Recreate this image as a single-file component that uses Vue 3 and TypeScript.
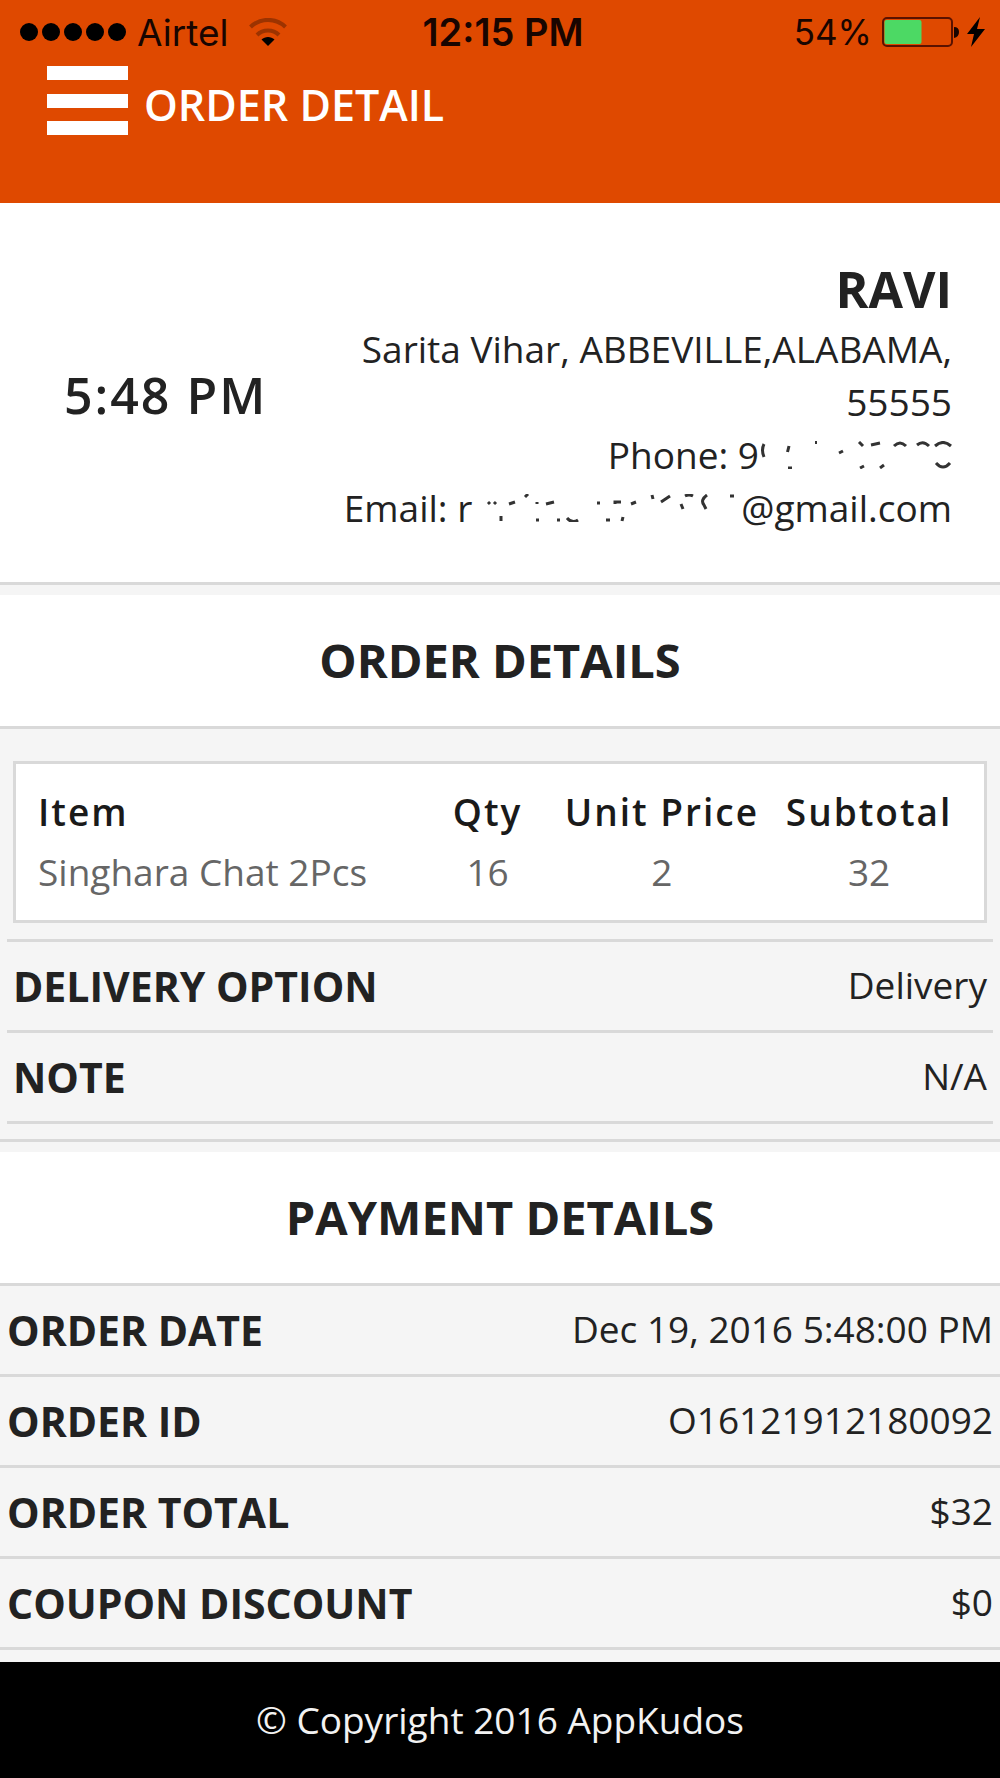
<script setup lang="ts">
interface Entry {
  label: string
  value: string
}

interface OrderItem {
  name: string
  qty: number
  unitPrice: number
}

const addressLines: string[] = ['Sarita Vihar, ABBEVILLE,ALABAMA,', '55555']

const items: OrderItem[] = [{ name: 'Singhara Chat 2Pcs', qty: 16, unitPrice: 2 }]

const orderEntries: Entry[] = [
  { label: 'DELIVERY OPTION', value: 'Delivery' },
  { label: 'NOTE', value: 'N/A' },
]

const paymentEntries: Entry[] = [
  { label: 'ORDER DATE', value: 'Dec 19, 2016 5:48:00 PM' },
  { label: 'ORDER ID', value: 'O16121912180092' },
  { label: 'ORDER TOTAL', value: '$32' },
  { label: 'COUPON DISCOUNT', value: '$0' },
]
</script>

<template>
  <div class="page">
    <header class="top">
      <div class="status">
        <div class="carrier">
          <span class="signal"><i v-for="n in 5" :key="n"></i></span>
          <span>Airtel</span>
          <svg class="wifi" width="38" height="28" viewBox="0 0 38 28" aria-hidden="true">
            <g fill="none" stroke="#9c3300" stroke-width="4">
              <path d="M1.500 9C11-0.500 27-0.500 36.500 9" />
              <path d="M8 17C14 11 24 11 30 17" />
            </g>
            <path d="M12.500 21.500C16 18 22 18 25.500 21.500L19 28Z" fill="#000" />
          </svg>
        </div>
        <div class="clock">12:15 PM</div>
        <div class="power">
          <span>54%</span>
          <svg width="104" height="32" viewBox="0 0 104 32" aria-hidden="true">
            <rect x="1" y="2" width="69" height="28" rx="4" fill="none" stroke="#5a1200" stroke-width="2" />
            <rect x="2.500" y="4" width="37" height="24" rx="2" fill="#4cd964" />
            <path d="M72 11q5 0 5 5t-5 6z" fill="#1a0500" />
            <path d="M98 1L85 18H92L89 31L103 13H95Z" fill="#000" />
          </svg>
        </div>
      </div>
      <div class="bar">
        <button class="menu" type="button" aria-label="Menu"><i></i><i></i><i></i></button>
        <h1>ORDER DETAIL</h1>
      </div>
    </header>

    <main>
      <section class="customer">
        <time class="time">5:48 PM</time>
        <address>
          <strong>RAVI</strong>
          <span v-for="line in addressLines" :key="line">{{ line }}</span>
          <span>Phone: 9<svg class="scrub" width="193" height="28" viewBox="0 0 193 28" aria-hidden="true">
              <path d="M5 3Q2 9 5 16M30 5L28.500 11M29 27H33M56 1.500H58M80 12L84 10M135 5Q141-1 147 5M158 4Q164-1 170 5M176 5Q184-2 192 5M177 22Q184 30 191 22M100 1L104 5M112 4L121 2M101 27L105 25M121 27L125 24" />
            </svg></span>
          <span>Email: r<svg class="scrub" width="269" height="28" viewBox="0 0 269 28" aria-hidden="true">
              <path d="M16 8L18 10M22 10L24 8M29 22V27M37 10L43 8M53 3L56 0M65 8V10M74 10L82 8M64 26H67M85 26H88M95 24Q100 30 106 26M125 9H128M143 10V8H149M134 26H138M150 27L151 23M159 10L164 8M180 1L181 5M189 8L198 2M209 10L211 15M213 2Q217 0 221 2M235 1Q228 6 232 11L234 15M258 2H262" />
            </svg>@gmail.com</span>
        </address>
      </section>

      <section class="block">
        <h2>ORDER DETAILS</h2>
        <div class="card">
          <table>
            <thead>
              <tr>
                <th scope="col">Item</th>
                <th scope="col">Qty</th>
                <th scope="col">Unit Price</th>
                <th scope="col">Subtotal</th>
              </tr>
            </thead>
            <tbody>
              <tr v-for="item in items" :key="item.name">
                <td>{{ item.name }}</td>
                <td>{{ item.qty }}</td>
                <td>{{ item.unitPrice }}</td>
                <td>{{ item.qty * item.unitPrice }}</td>
              </tr>
            </tbody>
          </table>
        </div>
        <dl class="entries inset">
          <div v-for="entry in orderEntries" :key="entry.label">
            <dt>{{ entry.label }}</dt>
            <dd>{{ entry.value }}</dd>
          </div>
        </dl>
      </section>

      <section>
        <h2>PAYMENT DETAILS</h2>
        <dl class="entries">
          <div v-for="entry in paymentEntries" :key="entry.label">
            <dt>{{ entry.label }}</dt>
            <dd>{{ entry.value }}</dd>
          </div>
        </dl>
      </section>
    </main>

    <footer>© Copyright 2016 AppKudos</footer>
  </div>
</template>

<style>
body {
  margin: 0;
}
</style>

<style scoped>
.page {
  display: flex;
  flex-direction: column;
  min-height: 100vh;
  background: #f5f5f5;
  color: #222;
  font-family: "Open Sans", "Noto Sans", sans-serif;
  font-size: 37px;
}

.page * {
  box-sizing: border-box;
}

h1,
h2,
dl,
dd {
  margin: 0;
}

.top {
  padding-bottom: 68px;
  background: #df4900;
}

.status {
  display: grid;
  grid-template-columns: 1fr auto 1fr;
  align-items: center;
  height: 64px;
  padding: 0 14px 0 20px;
  color: #180500;
  font-family: Inter, "Liberation Sans", sans-serif;
}

.carrier,
.power,
.signal {
  display: flex;
  align-items: center;
}

.signal {
  gap: 4px;
  margin-right: 11px;
}

.signal i {
  width: 18px;
  height: 18px;
  border-radius: 50%;
  background: #000;
}

.wifi {
  margin-left: 21px;
}

.clock {
  font-size: 38px;
  font-weight: 600;
}

.power {
  justify-content: flex-end;
  gap: 10px;
  font-size: 35px;
}

.bar {
  display: flex;
  align-items: flex-end;
  gap: 16px;
  height: 71px;
  padding-left: 47px;
}

.menu {
  display: flex;
  flex-direction: column;
  justify-content: space-between;
  width: 81px;
  height: 69px;
  padding: 0;
  border: 0;
  background: none;
}

.menu i {
  height: 14px;
  background: #fff;
}

h1 {
  color: #fff;
  font-size: 43px;
  font-weight: 600;
  line-height: 60px;
}

.customer {
  display: flex;
  align-items: center;
  justify-content: space-between;
  padding: 53px 48px 48px 64px;
  border-bottom: 3px solid #d9d9d9;
  background: #fff;
}

.time {
  font-size: 50px;
  font-weight: 600;
  letter-spacing: 2px;
}

address {
  display: flex;
  flex-direction: column;
  font-style: normal;
  line-height: 53px;
  text-align: right;
}

address strong {
  font-size: 50px;
  line-height: 66px;
}

.scrub {
  fill: none;
  stroke: #333;
  stroke-width: 3;
}

h2 {
  margin-top: 10px;
  border-bottom: 3px solid #d9d9d9;
  background: #fff;
  font-size: 47px;
  line-height: 131px;
  text-align: center;
}

.block {
  padding-bottom: 15px;
  border-bottom: 3px solid #d9d9d9;
}

.card {
  margin: 32px 13px 16px;
  padding: 18px 16px 18px 10px;
  border: 3px solid #d9d9d9;
  background: #fff;
}

table {
  width: 100%;
  border-collapse: collapse;
  line-height: 60px;
}

th,
td {
  padding: 0;
  text-align: center;
  white-space: nowrap;
}

th {
  color: #1a1a1a;
  font-weight: 600;
  letter-spacing: 2px;
}

td {
  color: #666;
}

th:first-child,
td:first-child {
  width: 42%;
  padding-left: 12px;
  text-align: left;
}

th:nth-child(2) {
  width: 14%;
}

th:nth-child(3) {
  width: 23%;
}

.entries > div {
  display: flex;
  align-items: center;
  justify-content: space-between;
  height: 91px;
  padding: 0 7px;
  border-bottom: 3px solid #d9d9d9;
}

.entries.inset {
  margin: 0 7px;
  border-top: 3px solid #d9d9d9;
}

.entries.inset > div {
  padding: 0 6px;
}

dt {
  font-size: 41px;
  font-weight: 700;
}

dd {
  padding-bottom: 4px;
}

footer {
  margin-top: auto;
  background: #000;
  color: #f2f2f2;
  line-height: 116px;
  text-align: center;
}
</style>
